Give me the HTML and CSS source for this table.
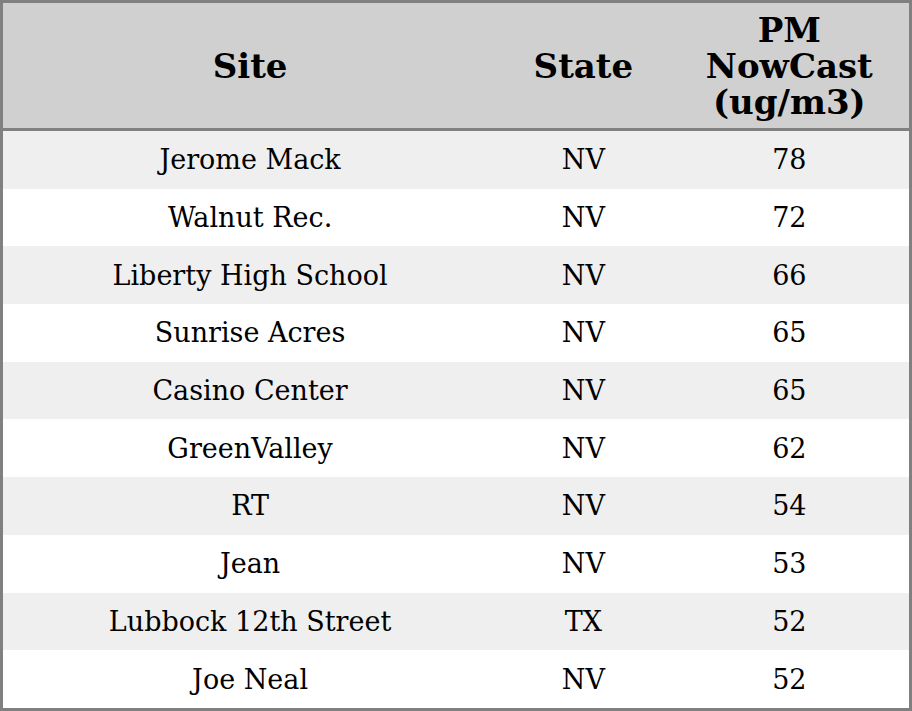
FILE: index.html
```html
<!DOCTYPE html>
<html>
<head>
<meta charset="utf-8">
<link rel="stylesheet" href="styles.css">
</head>
<body>
<table class="aq">
  <colgroup>
    <col class="c-site">
    <col class="c-state">
    <col class="c-pm">
  </colgroup>
  <thead>
    <tr><th>Site</th><th>State</th><th>PM<br>NowCast<br>(ug/m3)</th></tr>
  </thead>
  <tbody>
    <tr><td>Jerome Mack</td><td>NV</td><td>78</td></tr>
    <tr><td>Walnut Rec.</td><td>NV</td><td>72</td></tr>
    <tr><td>Liberty High School</td><td>NV</td><td>66</td></tr>
    <tr><td>Sunrise Acres</td><td>NV</td><td>65</td></tr>
    <tr><td>Casino Center</td><td>NV</td><td>65</td></tr>
    <tr><td>GreenValley</td><td>NV</td><td>62</td></tr>
    <tr><td>RT</td><td>NV</td><td>54</td></tr>
    <tr><td>Jean</td><td>NV</td><td>53</td></tr>
    <tr><td>Lubbock 12th Street</td><td>TX</td><td>52</td></tr>
    <tr><td>Joe Neal</td><td>NV</td><td>52</td></tr>
  </tbody>
</table>
</body>
</html>
```
FILE: styles.css
```css
html, body { margin: 0; padding: 0; background: #ffffff; }
.aq {
  width: 912px;
  height: 711px;
  border-collapse: collapse;
  border: 3px solid #808080;
  font-family: "DejaVu Serif", serif;
  color: #000;
  table-layout: fixed;
}
.c-site { width: 494px; }
.c-state { width: 172px; }
.c-pm { width: 240px; }
.aq th {
  background: #d0d0d0;
  font-size: 34px;
  font-weight: bold;
  line-height: 36px;
  height: 125px;
  padding: 0;
  border-bottom: 3px solid #808080;
  text-align: center;
  vertical-align: middle;
}
.aq td {
  font-size: 27px;
  text-align: center;
  vertical-align: middle;
  padding: 0;
  height: 57.7px;
}
.aq tbody tr:nth-child(odd) { background: #efefef; }
.aq tbody tr:nth-child(even) { background: #ffffff; }
```
